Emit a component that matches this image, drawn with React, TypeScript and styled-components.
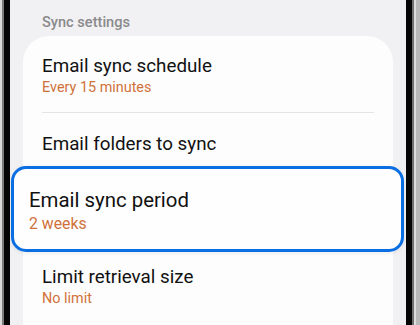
import React from 'react';
import styled, {createGlobalStyle} from "styled-components";

interface SettingItem {
    title: string;
    value?: string;
    focused?: boolean;
}

const items: SettingItem[] = [
    {title: 'Email sync schedule', value: 'Every 15 minutes'},
    {title: 'Email folders to sync'},
    {title: 'Email sync period', value: '2 weeks', focused: true},
    {title: 'Limit retrieval size', value: 'No limit'},
]

const App = () => {
    return (
        <>
            <GlobalStyle/>
            <Frame>
                <LeftBezel/>
                <Screen>
                    <SectionTitle>Sync settings</SectionTitle>
                    <Card>
                        {items.map((item, i) => {
                            const next = items[i + 1]
                            const showDivider = next && !item.focused && !next.focused
                            if (item.focused) {
                                return (
                                    <Focused key={item.title}>
                                        <FocusTitle>{item.title}</FocusTitle>
                                        {item.value && <FocusValue>{item.value}</FocusValue>}
                                    </Focused>
                                )
                            }
                            return (
                                <React.Fragment key={item.title}>
                                    <Row single={!item.value}>
                                        <Title>{item.title}</Title>
                                        {item.value && <Value>{item.value}</Value>}
                                    </Row>
                                    {showDivider && <Divider/>}
                                </React.Fragment>
                            )
                        })}
                    </Card>
                </Screen>
                <RightBezel/>
            </Frame>
        </>
    );
};

const GlobalStyle = createGlobalStyle`
  html, body {
    margin: 0;
    padding: 0;
    overflow: hidden;
  }

  body {
    font-family: Roboto, "Liberation Sans", sans-serif;
    background: #f1f1f3;
  }
`

const Frame = styled.div`
  display: flex;
  width: 420px;
  height: 325px;
  overflow: hidden;
`

const LeftBezel = styled.div`
  flex: 0 0 10px;
  background: linear-gradient(to right, #d9d9d9 0 2px, #7c7c7c 2px 4px, #050505 4px 10px);
`

const RightBezel = styled.div`
  flex: 0 0 14px;
  background: linear-gradient(to right, #050505 0 6px, #6f6f6f 6px 8px, #dcdcdc 8px 10px, #b9b9b9 10px 14px);
`

const Screen = styled.div`
  flex: 1;
  background: #f1f1f3;
  display: flex;
  flex-direction: column;
`

const SectionTitle = styled.div`
  padding: 12px 0 0 32px;
  margin-bottom: 4px;
  font-size: 14.6px;
  line-height: 20px;
  font-weight: 500;
  color: #8a8a8c;
`

const Card = styled.div`
  margin: 0 13px;
  background: #fdfdfd;
  border-radius: 26px;
  padding-bottom: 40px;
  display: flex;
  flex-direction: column;
`

const Row = styled.div<{ single: boolean }>`
  padding: ${(props) => props.single ? '19px 19px 14px' : '18px 19px 14px'};
  display: flex;
  flex-direction: column;
`

const Title = styled.div`
  font-size: 18.8px;
  line-height: 24px;
  color: #111;
`

const Value = styled.div`
  font-size: 14.4px;
  line-height: 20px;
  color: #d0713a;
`

const Divider = styled.div`
  height: 1px;
  margin: 0 19px;
  background: #e4e4e6;
`

const Focused = styled.div`
  margin: -4px -11px -5px -12px;
  padding: 18px 15px 14px;
  border: 3px solid #0b6ee3;
  border-radius: 15px;
  background: #fefefe;
  box-shadow: 0 1px 4px rgba(0, 0, 0, 0.08);
  display: flex;
  flex-direction: column;
  position: relative;
`

const FocusTitle = styled.div`
  font-size: 20.4px;
  line-height: 26px;
  color: #111;
`

const FocusValue = styled.div`
  font-size: 15.8px;
  line-height: 22px;
  color: #d0713a;
`

export default App;
